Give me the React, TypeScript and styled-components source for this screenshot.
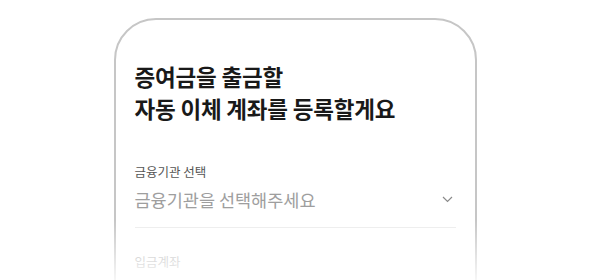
import React from 'react'
import styled, { createGlobalStyle } from 'styled-components'

const GlobalStyle = createGlobalStyle`
  html, body {
    margin: 0;
    padding: 0;
    background: #ffffff;
  }
  body {
    font-family: "Noto Sans CJK KR", "Noto Sans", sans-serif;
    -webkit-font-smoothing: antialiased;
  }
`

const Stage = styled.div`
  width: 590px;
  height: 280px;
  overflow: hidden;
  display: flex;
  justify-content: center;
  padding-top: 18px;
  box-sizing: border-box;
  position: relative;
`

const Phone = styled.div`
  width: 363px;
  height: 320px;
  box-sizing: border-box;
  border: 2px solid #c6c6c6;
  border-radius: 42px;
  padding: 40px 19px 0 19px;
  background: #fff;
`

const Fade = styled.div`
  position: absolute;
  left: 0;
  right: 0;
  bottom: 0;
  height: 60px;
  background: linear-gradient(to bottom, rgba(255, 255, 255, 0), rgba(255, 255, 255, 0.85));
  pointer-events: none;
`

const Title = styled.h1`
  margin: 0;
  font-size: 22.5px;
  line-height: 32px;
  font-weight: 700;
  color: #191919;
  letter-spacing: -0.2px;
`

const Field = styled.div`
  margin-top: 40px;
  display: flex;
  flex-direction: column;
`

const Label = styled.div<{ $muted?: boolean }>`
  font-size: 12.5px;
  line-height: 16px;
  color: ${({ $muted }) => ($muted ? '#b0b0b0' : '#555555')};
`

const SelectRow = styled.div`
  display: flex;
  align-items: center;
  justify-content: space-between;
  height: 26px;
  padding: 6px 3px 15px 0;
  border-bottom: 1px solid #ececec;
`

const Placeholder = styled.span`
  font-size: 17.5px;
  color: #9e9e9e;
`

const Chevron = () => (
  <svg width="11" height="7" viewBox="0 0 11 7" fill="none">
    <path d="M1 1l4.5 4.5L10 1" stroke="#8a8a8a" strokeWidth="1.2" />
  </svg>
)

const NextField = styled.div`
  margin-top: 26px;
`

export default function App() {
  return (
    <>
      <GlobalStyle />
      <Stage>
        <Phone>
          <Title>
            증여금을 출금할
            <br />
            자동 이체 계좌를 등록할게요
          </Title>
          <Field>
            <Label>금융기관 선택</Label>
            <SelectRow>
              <Placeholder>금융기관을 선택해주세요</Placeholder>
              <Chevron />
            </SelectRow>
          </Field>
          <NextField>
            <Label $muted>입금계좌</Label>
          </NextField>
        </Phone>
        <Fade />
      </Stage>
    </>
  )
}
